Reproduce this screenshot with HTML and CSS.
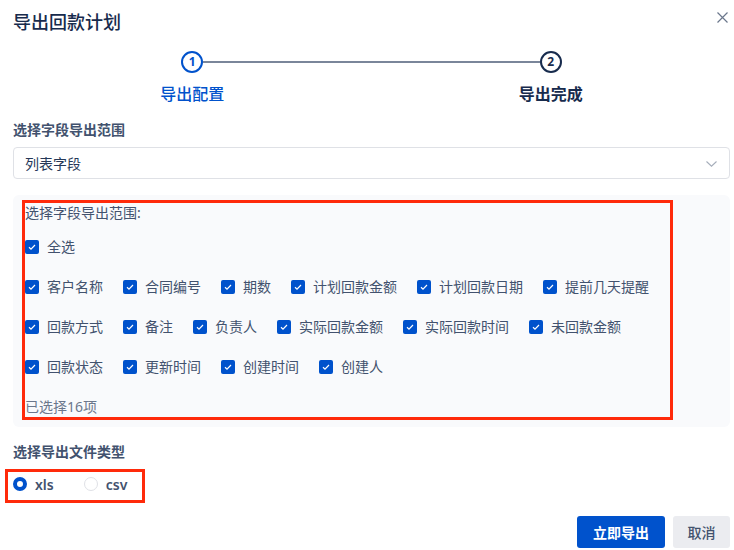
FILE: index.html
```html
<!DOCTYPE html>
<html lang="zh-CN">
<head>
<meta charset="utf-8">
<title>导出回款计划</title>
<link rel="stylesheet" href="styles.css">
</head>
<body>
<div class="dialog">
  <div class="dialog-header">
    <h1 class="dialog-title">导出回款计划</h1>
    <button class="close-btn" aria-label="关闭">
      <svg width="11" height="11" viewBox="0 0 11 11"><path d="M0.5 0.5 L10.5 10.5 M10.5 0.5 L0.5 10.5" stroke="#6b778c" stroke-width="1.2" fill="none"/></svg>
    </button>
  </div>

  <div class="steps">
    <div class="steps-track">
      <span></span>
      <span class="step-circle active">1</span>
      <span class="step-line"></span>
      <span class="step-circle done">2</span>
      <span></span>
    </div>
    <div class="steps-labels">
      <span class="step-label active">导出配置</span>
      <span class="step-label done">导出完成</span>
    </div>
  </div>

  <div class="field-label">选择字段导出范围</div>
  <div class="select">
    <span class="select-value">列表字段</span>
    <svg class="chevron" width="11" height="6" viewBox="0 0 11 6"><path d="M0.5 0.5 L5.5 5.2 L10.5 0.5" stroke="#a5adba" stroke-width="1.1" fill="none"/></svg>
  </div>

  <div class="panel">
    <div class="mark-box fields">
      <div class="fields-title">选择字段导出范围:</div>
      <label class="check"><span class="box"><svg width="14" height="14" viewBox="0 0 14 14"><path d="M4 7.2 L6 9.1 L10 5" stroke="#fff" stroke-width="1.2" fill="none"/></svg></span>全选</label>
      <div class="check-grid">
        <label class="check"><span class="box"><svg width="14" height="14" viewBox="0 0 14 14"><path d="M4 7.2 L6 9.1 L10 5" stroke="#fff" stroke-width="1.2" fill="none"/></svg></span>客户名称</label>
        <label class="check"><span class="box"><svg width="14" height="14" viewBox="0 0 14 14"><path d="M4 7.2 L6 9.1 L10 5" stroke="#fff" stroke-width="1.2" fill="none"/></svg></span>合同编号</label>
        <label class="check"><span class="box"><svg width="14" height="14" viewBox="0 0 14 14"><path d="M4 7.2 L6 9.1 L10 5" stroke="#fff" stroke-width="1.2" fill="none"/></svg></span>期数</label>
        <label class="check"><span class="box"><svg width="14" height="14" viewBox="0 0 14 14"><path d="M4 7.2 L6 9.1 L10 5" stroke="#fff" stroke-width="1.2" fill="none"/></svg></span>计划回款金额</label>
        <label class="check"><span class="box"><svg width="14" height="14" viewBox="0 0 14 14"><path d="M4 7.2 L6 9.1 L10 5" stroke="#fff" stroke-width="1.2" fill="none"/></svg></span>计划回款日期</label>
        <label class="check"><span class="box"><svg width="14" height="14" viewBox="0 0 14 14"><path d="M4 7.2 L6 9.1 L10 5" stroke="#fff" stroke-width="1.2" fill="none"/></svg></span>提前几天提醒</label>
        <label class="check"><span class="box"><svg width="14" height="14" viewBox="0 0 14 14"><path d="M4 7.2 L6 9.1 L10 5" stroke="#fff" stroke-width="1.2" fill="none"/></svg></span>回款方式</label>
        <label class="check"><span class="box"><svg width="14" height="14" viewBox="0 0 14 14"><path d="M4 7.2 L6 9.1 L10 5" stroke="#fff" stroke-width="1.2" fill="none"/></svg></span>备注</label>
        <label class="check"><span class="box"><svg width="14" height="14" viewBox="0 0 14 14"><path d="M4 7.2 L6 9.1 L10 5" stroke="#fff" stroke-width="1.2" fill="none"/></svg></span>负责人</label>
        <label class="check"><span class="box"><svg width="14" height="14" viewBox="0 0 14 14"><path d="M4 7.2 L6 9.1 L10 5" stroke="#fff" stroke-width="1.2" fill="none"/></svg></span>实际回款金额</label>
        <label class="check"><span class="box"><svg width="14" height="14" viewBox="0 0 14 14"><path d="M4 7.2 L6 9.1 L10 5" stroke="#fff" stroke-width="1.2" fill="none"/></svg></span>实际回款时间</label>
        <label class="check"><span class="box"><svg width="14" height="14" viewBox="0 0 14 14"><path d="M4 7.2 L6 9.1 L10 5" stroke="#fff" stroke-width="1.2" fill="none"/></svg></span>未回款金额</label>
        <label class="check"><span class="box"><svg width="14" height="14" viewBox="0 0 14 14"><path d="M4 7.2 L6 9.1 L10 5" stroke="#fff" stroke-width="1.2" fill="none"/></svg></span>回款状态</label>
        <label class="check"><span class="box"><svg width="14" height="14" viewBox="0 0 14 14"><path d="M4 7.2 L6 9.1 L10 5" stroke="#fff" stroke-width="1.2" fill="none"/></svg></span>更新时间</label>
        <label class="check"><span class="box"><svg width="14" height="14" viewBox="0 0 14 14"><path d="M4 7.2 L6 9.1 L10 5" stroke="#fff" stroke-width="1.2" fill="none"/></svg></span>创建时间</label>
        <label class="check"><span class="box"><svg width="14" height="14" viewBox="0 0 14 14"><path d="M4 7.2 L6 9.1 L10 5" stroke="#fff" stroke-width="1.2" fill="none"/></svg></span>创建人</label>
      </div>
      <div class="fields-count">已选择16项</div>
    </div>
  </div>

  <div class="field-label type-label">选择导出文件类型</div>
  <div class="mark-box radios">
    <label class="radio"><span class="dot checked"></span>xls</label>
    <label class="radio"><span class="dot"></span>csv</label>
  </div>

  <div class="footer">
    <button class="btn primary">立即导出</button>
    <button class="btn secondary">取消</button>
  </div>
</div>
</body>
</html>
```

FILE: styles.css
```css
* { box-sizing: border-box; }

html, body {
  margin: 0;
  padding: 0;
  background: #ffffff;
}

body {
  font-family: "Noto Sans", "Noto Sans CJK SC", sans-serif;
  color: #172b4d;
}

.dialog {
  width: 734px;
  height: 550px;
  padding: 10px 4px 0 13px;
  display: flex;
  flex-direction: column;
}

.dialog-header {
  display: flex;
  justify-content: space-between;
  align-items: flex-start;
  height: 24px;
}

.dialog-title {
  margin: 0;
  font-size: 18px;
  line-height: 24px;
  font-weight: 500;
  color: #172b4d;
}

.close-btn {
  border: none;
  background: none;
  padding: 0;
  margin: 2px 2px 0 0;
  width: 11px;
  height: 11px;
  display: flex;
}

/* steps */
.steps {
  margin-top: 17px;
}

.steps-track {
  display: grid;
  grid-template-columns: 1fr 22px 2fr 22px 1fr;
  align-items: center;
  height: 22px;
}

.step-circle {
  width: 22px;
  height: 22px;
  border-radius: 50%;
  border: 2px solid #0052cc;
  background: #fff;
  display: flex;
  align-items: center;
  justify-content: center;
  font-size: 12px;
  font-weight: 700;
  line-height: 1;
  color: #0052cc;
}

.step-circle.done {
  border-color: #172b4d;
  color: #172b4d;
}

.step-line {
  height: 2px;
  background: #7a869a;
}

.steps-labels {
  display: grid;
  grid-template-columns: 1fr 1fr;
  margin-top: 10px;
  text-align: center;
}

.step-label {
  font-size: 16px;
  line-height: 22px;
  font-weight: 500;
  color: #0052cc;
}

.step-label.done {
  font-weight: 700;
  color: #172b4d;
}

/* fields */
.field-label {
  margin-top: 15px;
  font-size: 14px;
  line-height: 20px;
  font-weight: 600;
  color: #42526e;
}

.select {
  margin-top: 7px;
  height: 32px;
  border: 1px solid #dfe1e6;
  border-radius: 4px;
  padding: 0 12px 0 11px;
  display: flex;
  align-items: center;
  justify-content: space-between;
}

.select-value {
  font-size: 14px;
  color: #253858;
}

.chevron {
  margin-top: 1px;
}

.panel {
  margin-top: 16px;
  background: #f9fafc;
  border-radius: 6px;
  padding: 5px 57px 7px 9px;
}

.mark-box {
  border: 3px solid #ff2a0a;
}

.fields {
  padding: 0;
  color: #42526e;
  font-size: 14px;
  line-height: 20px;
}

.fields-title {
  margin-bottom: 14px;
}

.check {
  display: flex;
  align-items: center;
  height: 20px;
  white-space: nowrap;
}

.box {
  width: 14px;
  height: 14px;
  border-radius: 2px;
  background: #0052cc;
  margin-right: 8px;
  display: flex;
}

.check-grid {
  margin-top: 20px;
  display: flex;
  flex-wrap: wrap;
  column-gap: 20px;
  row-gap: 20px;
}

.fields-count {
  margin-top: 20px;
  color: #6b778c;
}

/* radios */
.type-label {
  margin-top: 15px;
}

.radios {
  margin: 7px 0 0 -8px;
  width: 140px;
  height: 34px;
  padding: 2px 0 0 5px;
  display: flex;
  align-items: flex-start;
}

.radio {
  display: flex;
  align-items: center;
  height: 20px;
  font-size: 14px;
  font-weight: 600;
  color: #42526e;
  margin-right: 30px;
}

.dot {
  width: 14px;
  height: 14px;
  border-radius: 50%;
  border: 1px solid #dfe1e6;
  background: #fff;
  margin-right: 8px;
}

.dot.checked {
  border: 4px solid #0052cc;
  background: #fff;
}

/* footer */
.footer {
  margin-top: 13px;
  display: flex;
  justify-content: flex-end;
  gap: 8px;
}

.btn {
  height: 32px;
  border: none;
  border-radius: 3px;
  font-family: inherit;
  font-size: 14px;
  padding: 0;
}

.btn.primary {
  width: 88px;
  background: #0052cc;
  color: #fff;
  font-weight: 700;
}

.btn.secondary {
  width: 57px;
  background: #ebecf0;
  color: #42526e;
  font-weight: 500;
}
```
